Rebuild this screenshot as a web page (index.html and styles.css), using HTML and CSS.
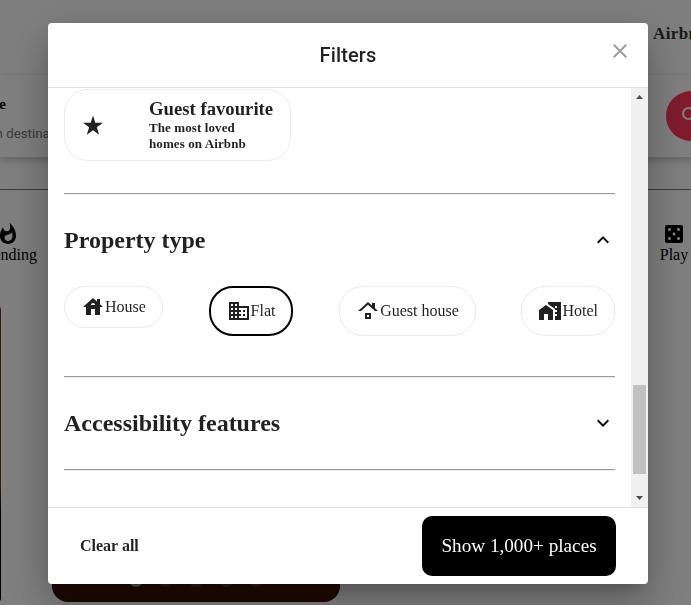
FILE: index.html
```html
<!DOCTYPE html>
<html lang="en">
<head>
<meta charset="utf-8">
<title>Filters</title>
<link rel="stylesheet" href="styles.css">
</head>
<body>
<div class="page">
  <header class="topbar"><span>Airbnb your home</span></header>
  <section class="search">
    <div class="where"><strong>Where</strong><span>Search destinations</span></div>
    <div class="search-btn"><svg viewBox="0 0 24 24"><path d="M15.5 14h-.79l-.28-.27A6.47 6.47 0 0 0 16 9.5 6.5 6.5 0 1 0 9.5 16c1.61 0 3.09-.59 4.23-1.57l.27.28v.79l5 4.99L20.49 19zm-6 0C7.01 14 5 11.99 5 9.5S7.01 5 9.5 5 14 7.01 14 9.5 11.99 14 9.5 14z"/></svg></div>
  </section>
  <nav class="categories">
    <div class="category trending"><svg viewBox="0 0 24 24"><path d="M13.5.67s.74 2.65.74 4.8c0 2.06-1.35 3.73-3.41 3.73-2.07 0-3.63-1.67-3.63-3.73l.03-.36C5.21 7.51 4 10.62 4 14c0 4.42 3.58 8 8 8s8-3.58 8-8C20 8.61 17.41 3.8 13.5.67zM11.71 19c-1.78 0-3.22-1.4-3.22-3.14 0-1.62 1.05-2.76 2.81-3.12 1.77-.36 3.6-1.21 4.62-2.58.39 1.29.59 2.65.59 4.04 0 2.65-2.15 4.8-4.8 4.8z"/></svg><span>Trending</span></div>
    <div class="category"><svg viewBox="0 0 24 24"><path d="M19 3H5c-1.1 0-2 .9-2 2v14c0 1.1.9 2 2 2h14c1.1 0 2-.9 2-2V5c0-1.1-.9-2-2-2zM7.500 18c-.83 0-1.500-.67-1.500-1.500S6.670 15 7.500 15s1.500.67 1.500 1.500S8.330 18 7.500 18zm0-9C6.670 9 6 8.330 6 7.500S6.670 6 7.500 6 9 6.670 9 7.500 8.330 9 7.500 9zm4.500 4.500c-.83 0-1.500-.67-1.500-1.500s.67-1.500 1.500-1.500 1.500.67 1.500 1.500-.67 1.500-1.500 1.500zm4.500 4.500c-.83 0-1.500-.67-1.500-1.500s.67-1.500 1.500-1.500 1.500.67 1.500 1.500-.67 1.500-1.500 1.500zm0-9c-.83 0-1.500-.67-1.500-1.500S15.670 6 16.500 6s1.500.67 1.500 1.500S17.330 9 16.500 9z"/></svg><span>Play</span></div>
  </nav>
  <main class="listings">
    <div class="listing first"></div>
    <div class="listing"><div class="dots"><i class="on"></i><i></i><i></i><i></i><i></i></div></div>
  </main>
</div>
<div class="backdrop">
  <div class="dialog">
    <div class="dialog-title">
      <h1>Filters</h1>
      <svg class="close" viewBox="0 0 24 24"><path d="M19 6.41 17.590 5 12 10.590 6.410 5 5 6.410 10.590 12 5 17.590 6.410 19 12 13.410 17.590 19 19 17.590 13.410 12z"/></svg>
    </div>
    <div class="dialog-body">
      <div class="content">
        <div class="favourite">
          <svg viewBox="0 0 24 24"><path d="M12 2.500 14.300 9.800H22L15.800 14.200 18.200 21.800 12 17.200 5.800 21.800 8.200 14.200 2 9.800H9.700z"/></svg>
          <div><b>Guest favourite</b><small>The most loved<br>homes on Airbnb</small></div>
        </div>
        <hr>
        <div class="section-head"><h2>Property type</h2><svg viewBox="0 0 24 24"><path d="m12 8-6 6 1.410 1.410L12 10.830l4.590 4.580L18 14z"/></svg></div>
        <div class="chips">
          <div class="chip short"><svg viewBox="0 0 24 24"><path d="M19 9.300V4h-3v2.600L12 3 2 12h3v8h5v-6h4v6h5v-8h3l-3-2.700zm-9 .7c0-1.100.9-2 2-2s2 .9 2 2h-4z"/></svg><span>House</span></div>
          <div class="chip selected"><svg viewBox="0 0 24 24"><path d="M12 7V3H2v18h20V7H12zM6 19H4v-2h2v2zm0-4H4v-2h2v2zm0-4H4V9h2v2zm0-4H4V5h2v2zm4 12H8v-2h2v2zm0-4H8v-2h2v2zm0-4H8V9h2v2zm0-4H8V5h2v2zm10 12h-8v-2h2v-2h-2v-2h2v-2h-2V9h8v10zm-2-8h-2v2h2v-2zm0 4h-2v2h2v-2z"/></svg><span>Flat</span></div>
          <div class="chip"><svg viewBox="0 0 24 24"><path d="M13 18h-2v-2h2v2zm2-4H9v6h6v-6zm4-4.700V4h-3v2.600L12 3 2 12h3l7-6.310L19 12h3l-3-2.700z"/></svg><span>Guest house</span></div>
          <div class="chip"><svg viewBox="0 0 24 24"><path d="M1 11v10h5v-6h4v6h5V11L8 6z"/><path d="M10 3v1.970l7 5V11h2v2h-2v2h2v2h-2v4h6V3H10zm9 6h-2V7h2v2z"/></svg><span>Hotel</span></div>
        </div>
        <hr>
        <div class="section-head"><h2>Accessibility features</h2><svg viewBox="0 0 24 24"><path d="M16.590 8.590 12 13.170 7.410 8.590 6 10l6 6 6-6z"/></svg></div>
        <hr>
      </div>
      <div class="scrollbar">
        <svg viewBox="0 0 17 17"><path d="M5 11h7L8.500 7z"/></svg>
        <div class="track"><div class="thumb"></div></div>
        <svg viewBox="0 0 17 17"><path d="M5 6h7l-3.500 4z"/></svg>
      </div>
    </div>
    <div class="dialog-actions"><span class="clear">Clear all</span><button>Show 1,000+ places</button></div>
  </div>
</div>
</body>
</html>
```
FILE: styles.css
```css
* { box-sizing: border-box; }
body {
  margin: 0;
  height: 605px;
  overflow: hidden;
  font-family: "Liberation Serif", serif;
  font-size: 16px;
}
svg { display: block; width: 24px; height: 24px; fill: currentColor; flex: none; }
.page { height: 605px; overflow: hidden; background: #fff; }
.topbar {
  height: 75px;
  padding: 24px 0 0 653px;
  white-space: nowrap;
  font-weight: 700;
  font-size: 17px;
  line-height: 20px;
  letter-spacing: .4px;
  color: #333;
}
.search {
  display: flex;
  justify-content: space-between;
  height: 82px;
  margin-right: -25px;
  padding: 16px 0;
  box-shadow: 0 3px 8px rgba(0, 0, 0, .24);
}
.where { display: flex; flex-direction: column; align-items: flex-end; width: 72px; margin-left: -40px; }
.where strong { width: 46px; margin-right: 26px; text-align: right; font-size: 15px; line-height: 27px; }
.where span {
  width: 140px;
  margin-right: -70px;
  line-height: 31px;
  font-family: Roboto, sans-serif;
  font-size: 13.3px;
  color: #757575;
  white-space: nowrap;
}
.search-btn { width: 50px; height: 50px; border-radius: 50%; background: #ff385c; color: #fff; padding: 13px; }
.categories {
  display: flex;
  justify-content: space-between;
  height: 117px;
  margin-top: 32px;
  padding: 32px 0 0;
  border-top: 1px solid #777;
  line-height: 18px;
}
.category { display: flex; flex-direction: column; align-items: center; width: 34px; }
.category.trending { width: 58px; margin-left: -21px; }
.listings { display: flex; gap: 51px; }
.listing {
  width: 288px;
  height: 296px;
  flex: none;
  border-radius: 16px;
  background: linear-gradient(#68351f, #3d1009);
}
.listing.first { margin-left: -287px; border-radius: 4px; background: linear-gradient(#68351f 60%, #100 70%); }
.dots { display: flex; justify-content: center; gap: 16px; padding-top: 267px; }
.dots i { width: 14px; height: 14px; border-radius: 50%; background: #5b3a30; }
.dots .on { background: #aaa39b; }
.backdrop {
  position: fixed;
  inset: 0;
  display: flex;
  justify-content: center;
  align-items: flex-start;
  padding: 23px 0 0 5px;
  background: rgba(0, 0, 0, .5);
}
.dialog {
  display: flex;
  flex-direction: column;
  width: 600px;
  height: 561px;
  overflow: hidden;
  border-radius: 4px;
  background: #fff;
  color: rgba(0, 0, 0, .87);
  box-shadow: 0 11px 15px -7px rgba(0, 0, 0, .2), 0 24px 38px 3px rgba(0, 0, 0, .14), 0 9px 46px 8px rgba(0, 0, 0, .12);
}
.dialog-title {
  display: grid;
  grid-template-columns: 1fr auto 1fr;
  align-items: center;
  height: 64px;
  padding: 0 16px;
}
.dialog-title h1 {
  grid-column: 2;
  margin: 0;
  font: 500 20px/32px Roboto, sans-serif;
  letter-spacing: .0075em;
}
.close { justify-self: end; align-self: start; margin-top: 16px; color: #9e9e9e; }
.dialog-body {
  display: flex;
  height: 421px;
  border-top: 1px solid #e0e0e0;
  border-bottom: 1px solid #e0e0e0;
}
.content { flex: 1; padding: 1px 16px 0; overflow: hidden; }
.favourite {
  display: flex;
  align-items: center;
  gap: 44px;
  width: 227px;
  height: 72px;
  padding: 0 16px;
  border: 1px solid #ebebeb;
  border-radius: 24px;
}
.favourite b { display: block; margin-top: -1px; padding-bottom: 1px; font-size: 18.72px; line-height: 21px; white-space: nowrap; }
.favourite small { display: block; font-size: 13px; font-weight: 700; line-height: 16px; letter-spacing: .1px; }
hr { height: 2px; margin: 32px 0; border: 0; border-top: 1px solid #9a9a9a; border-bottom: 1px solid #eee; }
.section-head { display: flex; justify-content: space-between; align-items: center; height: 27px; }
.section-head h2 { margin: 0; font-size: 24px; line-height: 27px; }
.section-head svg { margin-bottom: 2px; color: #111; }
.chips { display: flex; justify-content: space-between; align-items: flex-start; height: 50px; margin: 32px 0 40px; }
.chip {
  display: flex;
  align-items: center;
  height: 50px;
  padding: 0 16px;
  border: 1px solid #ebebeb;
  border-radius: 24px;
  white-space: nowrap;
}
.chip.short { height: 42px; }
.chip.selected { border: 2px solid #000; }
.scrollbar { display: flex; flex-direction: column; width: 17px; background: #f0f0f0; color: #505050; }
.scrollbar svg { width: 17px; height: 17px; }
.track { flex: 1; padding: 280px 2px 0; }
.thumb { height: 89px; background: #c1c1c1; }
.dialog-actions { display: flex; justify-content: space-between; align-items: center; height: 76px; padding: 0 32px; }
.clear { font-size: 16px; font-weight: 700; }
button {
  width: 194px;
  height: 60px;
  padding: 0;
  border: 0;
  border-radius: 10px;
  background: #000;
  color: #fff;
  font: 19.2px "Liberation Serif", serif;
}
```
